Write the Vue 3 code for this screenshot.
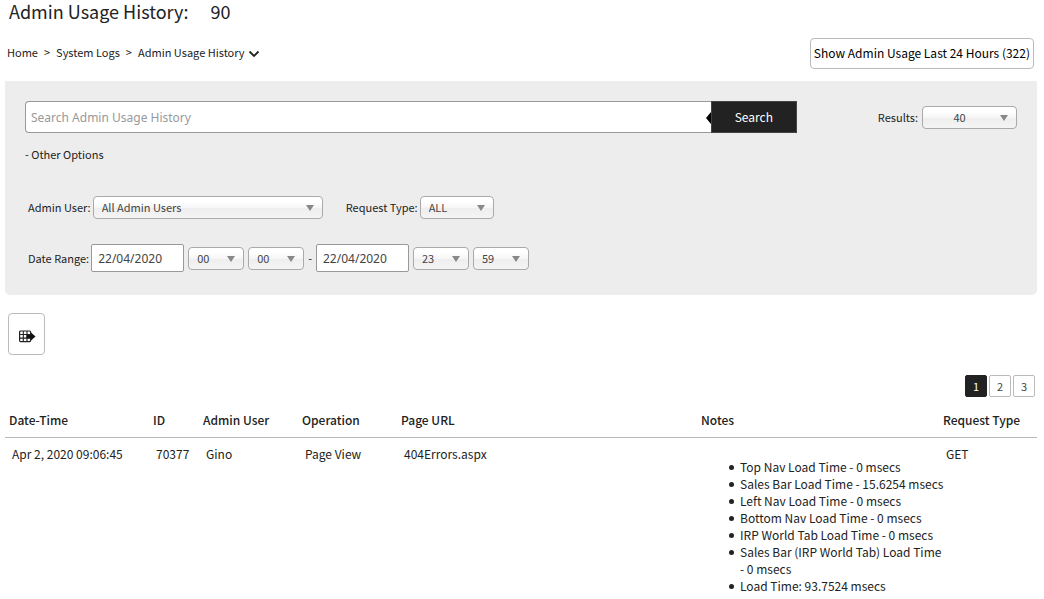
<script setup>
import { ref } from 'vue'

const query = ref('')
const results = ref('40')
const adminUser = ref('All Admin Users')
const requestType = ref('ALL')
const fromDate = ref('22/04/2020')
const toDate = ref('22/04/2020')
const fromHour = ref('00')
const fromMinute = ref('00')
const toHour = ref('23')
const toMinute = ref('59')
const page = ref(1)

const pad = (n) => String(n).padStart(2, '0')
const hours = Array.from({ length: 24 }, (_, i) => pad(i))
const minutes = Array.from({ length: 60 }, (_, i) => pad(i))

const rows = [
  {
    time: 'Apr 2, 2020 09:06:45',
    id: '70377',
    user: 'Gino',
    operation: 'Page View',
    url: '404Errors.aspx',
    notes: [
      'Top Nav Load Time - 0 msecs',
      'Sales Bar Load Time - 15.6254 msecs',
      'Left Nav Load Time - 0 msecs',
      'Bottom Nav Load Time - 0 msecs',
      'IRP World Tab Load Time - 0 msecs',
      'Sales Bar (IRP World Tab) Load Time - 0 msecs',
      'Load Time: 93.7524 msecs',
    ],
    type: 'GET',
  },
]
</script>

<template>
  <main class="page">
    <h1 class="title">Admin Usage History: <span class="count">90</span></h1>

    <div class="topbar">
      <nav class="crumbs" aria-label="Breadcrumb">
        <a href="#">Home</a>
        <span class="sep">&gt;</span>
        <a href="#">System Logs</a>
        <span class="sep">&gt;</span>
        <a href="#" class="current">Admin Usage History
          <svg class="chevron" width="12" height="8" viewBox="0 0 12 8" aria-hidden="true">
            <path d="M1.500 1.500 L6 6 L10.500 1.500" fill="none" stroke="#222" stroke-width="1.800" />
          </svg>
        </a>
      </nav>
      <button type="button" class="recent">Show Admin Usage Last 24 Hours (322)</button>
    </div>

    <form class="panel" @submit.prevent>
      <div class="search-row">
        <div class="search">
          <input v-model="query" type="text" class="search-input" placeholder="Search Admin Usage History" aria-label="Search Admin Usage History" />
          <button type="submit" class="search-button">Search</button>
        </div>
        <div class="field">
          <label for="results">Results:</label>
          <span class="picker results">
            <select id="results" v-model="results">
              <option>20</option>
              <option>40</option>
              <option>80</option>
            </select>
          </span>
        </div>
      </div>

      <button type="button" class="toggle">- Other Options</button>

      <div class="filters">
        <div class="field">
          <label for="admin-user">Admin User:</label>
          <span class="picker user">
            <select id="admin-user" v-model="adminUser">
              <option>All Admin Users</option>
              <option>Gino</option>
            </select>
          </span>
        </div>
        <div class="field">
          <label for="request-type">Request Type:</label>
          <span class="picker type">
            <select id="request-type" v-model="requestType">
              <option>ALL</option>
              <option>GET</option>
              <option>POST</option>
            </select>
          </span>
        </div>
      </div>

      <div class="field dates">
        <label for="from-date">Date Range:</label>
        <input id="from-date" v-model="fromDate" type="text" class="date" />
        <span class="picker time">
          <select v-model="fromHour" aria-label="From hour">
            <option v-for="h in hours" :key="h">{{ h }}</option>
          </select>
        </span>
        <span class="picker time">
          <select v-model="fromMinute" aria-label="From minute">
            <option v-for="m in minutes" :key="m">{{ m }}</option>
          </select>
        </span>
        <span>-</span>
        <input v-model="toDate" type="text" class="date" aria-label="To date" />
        <span class="picker time">
          <select v-model="toHour" aria-label="To hour">
            <option v-for="h in hours" :key="h">{{ h }}</option>
          </select>
        </span>
        <span class="picker time">
          <select v-model="toMinute" aria-label="To minute">
            <option v-for="m in minutes" :key="m">{{ m }}</option>
          </select>
        </span>
      </div>
    </form>

    <button type="button" class="export" aria-label="Export table">
      <svg width="18" height="13" viewBox="0 0 18 13" aria-hidden="true">
        <rect x="1.600" y="1" width="11" height="10.600" rx="1" fill="#fff" stroke="#222" stroke-width="1.200" />
        <path d="M5.300 1V12 M9 1V12 M2 4.500H12.500 M2 8.100H12.500" stroke="#222" stroke-width="1.100" />
        <path d="M8.500 4.800H13V2.500L17.500 6.500L13 10.500V8.200H8.500Z" fill="#111" />
      </svg>
    </button>

    <nav class="pager" aria-label="Pages">
      <button v-for="n in 3" :key="n" type="button" :class="{ active: n === page }" @click="page = n">{{ n }}</button>
    </nav>

    <table class="log">
      <colgroup>
        <col class="c-time" />
        <col class="c-id" />
        <col class="c-mid" />
        <col class="c-mid" />
        <col />
        <col class="c-notes" />
        <col class="c-type" />
      </colgroup>
      <thead>
        <tr>
          <th>Date-Time</th>
          <th>ID</th>
          <th>Admin User</th>
          <th>Operation</th>
          <th>Page URL</th>
          <th>Notes</th>
          <th>Request Type</th>
        </tr>
      </thead>
      <tbody>
        <tr v-for="row in rows" :key="row.id">
          <td>{{ row.time }}</td>
          <td>{{ row.id }}</td>
          <td>{{ row.user }}</td>
          <td>{{ row.operation }}</td>
          <td>{{ row.url }}</td>
          <td>
            <ul>
              <li v-for="note in row.notes" :key="note">{{ note }}</li>
            </ul>
          </td>
          <td>{{ row.type }}</td>
        </tr>
      </tbody>
    </table>
  </main>
</template>

<style>
body {
  background: #fff;
}
</style>

<style scoped>
.page {
  padding: 0 7px 0 5px;
  font-family: "Noto Sans CJK SC", "Open Sans", sans-serif;
  font-size: 12px;
  line-height: 17px;
  color: #222;
}
.page * {
  box-sizing: border-box;
}
button,
select,
input {
  margin: 0;
  font: inherit;
  color: inherit;
}
button {
  padding: 0;
  cursor: pointer;
}
a {
  color: inherit;
  text-decoration: none;
}
.title {
  margin: 0;
  padding-left: 4px;
  font-size: 18px;
  font-weight: 400;
  line-height: 23px;
}
.count {
  margin-left: 18px;
}
.topbar {
  display: flex;
  justify-content: space-between;
  align-items: center;
  margin: 15px 3px 12px 2px;
}
.crumbs {
  display: flex;
  gap: 6px;
  padding-bottom: 2px;
  font-size: 11px;
}
.current {
  display: flex;
  align-items: center;
  gap: 3px;
}
.chevron {
  margin-top: 2px;
}
.recent {
  height: 31px;
  padding: 0 3px 2px;
  border: 1px solid #bbb;
  border-radius: 4px;
  background: #fff;
  color: #000;
}
.panel {
  padding: 20px 20px 23px;
  border-radius: 0 0 5px 5px;
  background: #ededed;
  font-size: 11px;
}
.search-row {
  display: flex;
  align-items: center;
  gap: 81px;
}
.search {
  display: flex;
  flex: 1;
}
.search-input {
  flex: 1;
  min-width: 0;
  height: 32px;
  padding: 0 5px;
  border: 1px solid #999;
  border-right: 0;
  border-radius: 4px 0 0 4px;
  background: #fff;
  font-family: "Noto Sans", sans-serif;
  font-size: 12px;
}
.search-input::placeholder {
  color: #999;
  opacity: 1;
}
.search-button {
  position: relative;
  width: 86px;
  height: 32px;
  padding-bottom: 2px;
  border: 1px solid #444;
  background: #222;
  color: #fff;
  font-size: 12px;
}
.search-button::before {
  content: "";
  position: absolute;
  left: -6px;
  top: 10px;
  border: solid transparent;
  border-width: 6px 5px 6px 0;
  border-right-color: #000;
}
.field {
  display: flex;
  align-items: center;
  gap: 4px;
}
.filters label,
.dates label {
  margin-right: -2px;
}
.picker {
  position: relative;
  display: inline-flex;
}
.picker::after {
  content: "";
  position: absolute;
  right: 9px;
  top: 9px;
  border: solid transparent;
  border-width: 6px 4px 0;
  border-top-color: #888;
  pointer-events: none;
}
.picker select {
  appearance: none;
  width: 100%;
  height: 23px;
  padding: 0 20px 0 8px;
  border: 1px solid #aaa;
  border-radius: 4px;
  background: linear-gradient(#fff 20%, #f6f6f6 50%, #eee 52%, #f4f4f4);
  color: #444;
}
.results {
  width: 95px;
}
.picker.results select {
  padding-left: 0;
  text-align: center;
  text-align-last: center;
}
.user {
  width: 230px;
}
.type {
  width: 74px;
}
.time {
  width: 56px;
}
.toggle {
  display: block;
  margin-top: 13px;
  border: 0;
  background: none;
}
.filters {
  display: flex;
  gap: 23px;
  margin: 33px 0 25px 3px;
}
.dates {
  margin-left: 3px;
}
.date {
  width: 93px;
  height: 28px;
  padding: 0 6px;
  border: 1px solid #999;
  border-radius: 2px;
  background: #fff;
  color: #444;
  font-family: "Noto Sans", sans-serif;
  font-size: 12px;
}
.export {
  display: flex;
  justify-content: center;
  align-items: center;
  width: 37px;
  height: 42px;
  margin: 18px 0 20px 3px;
  padding-top: 4px;
  border: 1px solid #bbb;
  border-radius: 4px;
  background: #fff;
}
.pager {
  display: flex;
  justify-content: flex-end;
  gap: 2px;
  margin-right: 2px;
}
.pager button {
  width: 22px;
  height: 22px;
  border: 1px solid #bbb;
  border-radius: 2px;
  background: #fff;
  color: #444;
  font-size: 11px;
}
.pager .active {
  border-color: #222;
  background: #222;
  color: #fff;
}
.log {
  width: 100%;
  margin-top: 8px;
  border-collapse: collapse;
  table-layout: fixed;
}
.c-time {
  width: 144px;
}
.c-id {
  width: 50px;
}
.c-mid {
  width: 99px;
}
.c-notes {
  width: 242px;
}
.c-type {
  width: 98px;
}
th {
  padding: 6px 4px 9px;
  border-bottom: 1px solid #bbb;
  font-weight: 500;
  text-align: left;
  white-space: nowrap;
}
td {
  padding: 7px 0 0 7px;
  vertical-align: top;
  white-space: nowrap;
}
ul {
  margin: 13px -6px 0 0;
  padding: 0 0 0 36px;
  list-style: none;
  white-space: normal;
}
li {
  position: relative;
}
li::before {
  content: "";
  position: absolute;
  left: -11px;
  top: 7px;
  width: 5px;
  height: 5px;
  border-radius: 50%;
  background: #222;
}
</style>
